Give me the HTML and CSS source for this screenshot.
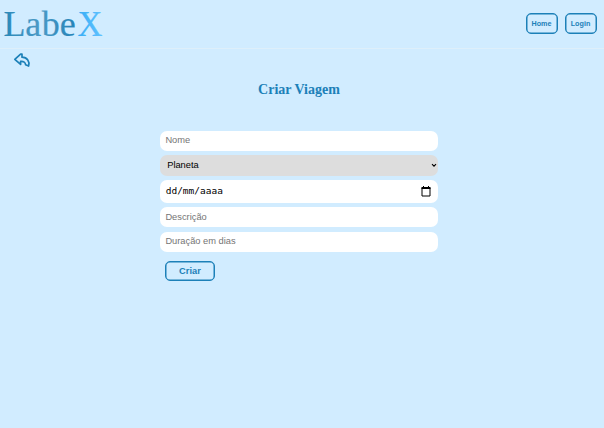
FILE: index.html
```html
<!DOCTYPE html>
<html lang="pt-BR">
<head>
<meta charset="utf-8">
<title>LabeX</title>
<link rel="stylesheet" href="styles.css">
</head>
<body>
<header class="header">
  <svg class="logo" width="106" height="44" viewBox="0 0 106 44" role="img" aria-label="LabeX">
    <defs>
      <linearGradient id="ink" x1="0" y1="0" x2="1" y2="0"><stop offset="0" stop-color="#2a88b8"/><stop offset=".5" stop-color="#4a9ac6"/><stop offset="1" stop-color="#2583b7"/></linearGradient>
      <linearGradient id="sky" x1="0" y1="0" x2="1" y2="0"><stop offset="0" stop-color="#35adf5"/><stop offset="1" stop-color="#62c2ff"/></linearGradient>
    </defs>
    <text class="logo-text" x="3.5 25.2 41.8 59.8" y="35.8" fill="url(#ink)" stroke="url(#ink)">Labe</text>
    <text class="logo-text" x="77.5" y="35.8" textLength="25" lengthAdjust="spacingAndGlyphs" fill="url(#sky)" stroke="url(#sky)">X</text>
  </svg>
  <nav class="nav">
    <button class="nav-button">Home</button>
    <button class="nav-button">Login</button>
  </nav>
</header>
<main class="page">
  <a class="back" aria-label="Voltar">
    <svg width="18" height="16" viewBox="0 0 18 16"><path d="M7.6 2.2 1.8 7.3 7.6 12.4V9.4C10.6 9.1 12.5 10.4 12.6 12.8L15.6 14C17 9.6 14.2 5.3 9 5.2V2.2Z"/></svg>
  </a>
  <h1 class="title">Criar Viagem</h1>
  <form class="form">
    <div class="field placeholder">Nome</div>
    <div class="field select"><span>Planeta</span><svg width="6" height="5" viewBox="0 0 6 5"><path d="M1 1.2 3 3.2 5 1.2"/></svg></div>
    <div class="field date"><span>dd/mm/aaaa</span><svg width="10" height="11" viewBox="0 0 10 11"><path class="calendar" d="M1 2h8v8H1z"/><path d="M0.5 1h9v2h-9zM2 0h1v2H2zM7 0h1v2H7z"/></svg></div>
    <div class="field placeholder">Descrição</div>
    <div class="field placeholder">Duração em dias</div>
    <button class="submit" type="button">Criar</button>
  </form>
</main>
</body>
</html>
```

FILE: styles.css
```css
* { box-sizing: border-box; }
body { margin: 0; min-height: 428px; background: #d1ecff; font-family: "Liberation Sans", Arial, sans-serif; }
.header { height: 49px; display: flex; justify-content: space-between; border-bottom: 1px solid #deeffa; }
.logo { display: block; }
.logo-text { font: 36px "Liberation Serif", serif; stroke-width: .2; }
.nav { display: flex; gap: 7px; padding: 13px 7.5px 0 0; }
.nav-button, .submit { background: transparent; border: 1px solid #1c80b8; box-shadow: inset 0 0 0 .5px #1c80b8; border-radius: 5px; color: #1c80b8; font-family: inherit; font-weight: bold; padding: 0; }
.nav-button { width: 32px; height: 20.5px; font-size: 7.2px; line-height: 17px; }
.page { display: flex; flex-direction: column; }
.back { display: block; height: 18px; margin: 3px 0 0 13px; }
.back svg { display: block; fill: none; stroke: #1c80b8; stroke-width: 1.7; stroke-linejoin: round; }
.title { margin: 12px 0 0; padding-right: 6px; height: 16px; text-align: center; color: #1c80b8; font: bold 14px/16px "Liberation Serif", serif; }
.form { width: 277.2px; margin: 32.5px 0 0 160.4px; display: flex; flex-direction: column; gap: 4.5px; }
.field { height: 20.3px; padding: 0 5px; display: flex; align-items: center; justify-content: space-between; border-radius: 7px; background: #fff; font-size: 9.3px; line-height: 12px; color: #000; }
.placeholder { color: #757575; padding-bottom: 1.4px; }
.select { background: #ddd; padding: 0 1px 0 6.8px; }
.select svg { fill: none; stroke: #000; stroke-width: 1.1; }
.date { height: 22.5px; padding: 0 7px 0 5.3px; font-family: "DejaVu Sans Mono", monospace; font-size: 9.5px; }
.date svg { fill: #000; }
.date .calendar { fill: none; stroke: #000; }
.submit { width: 49.5px; height: 20.5px; margin: 4.2px 0 0 4.8px; font-size: 9.3px; line-height: 18px; }
```
